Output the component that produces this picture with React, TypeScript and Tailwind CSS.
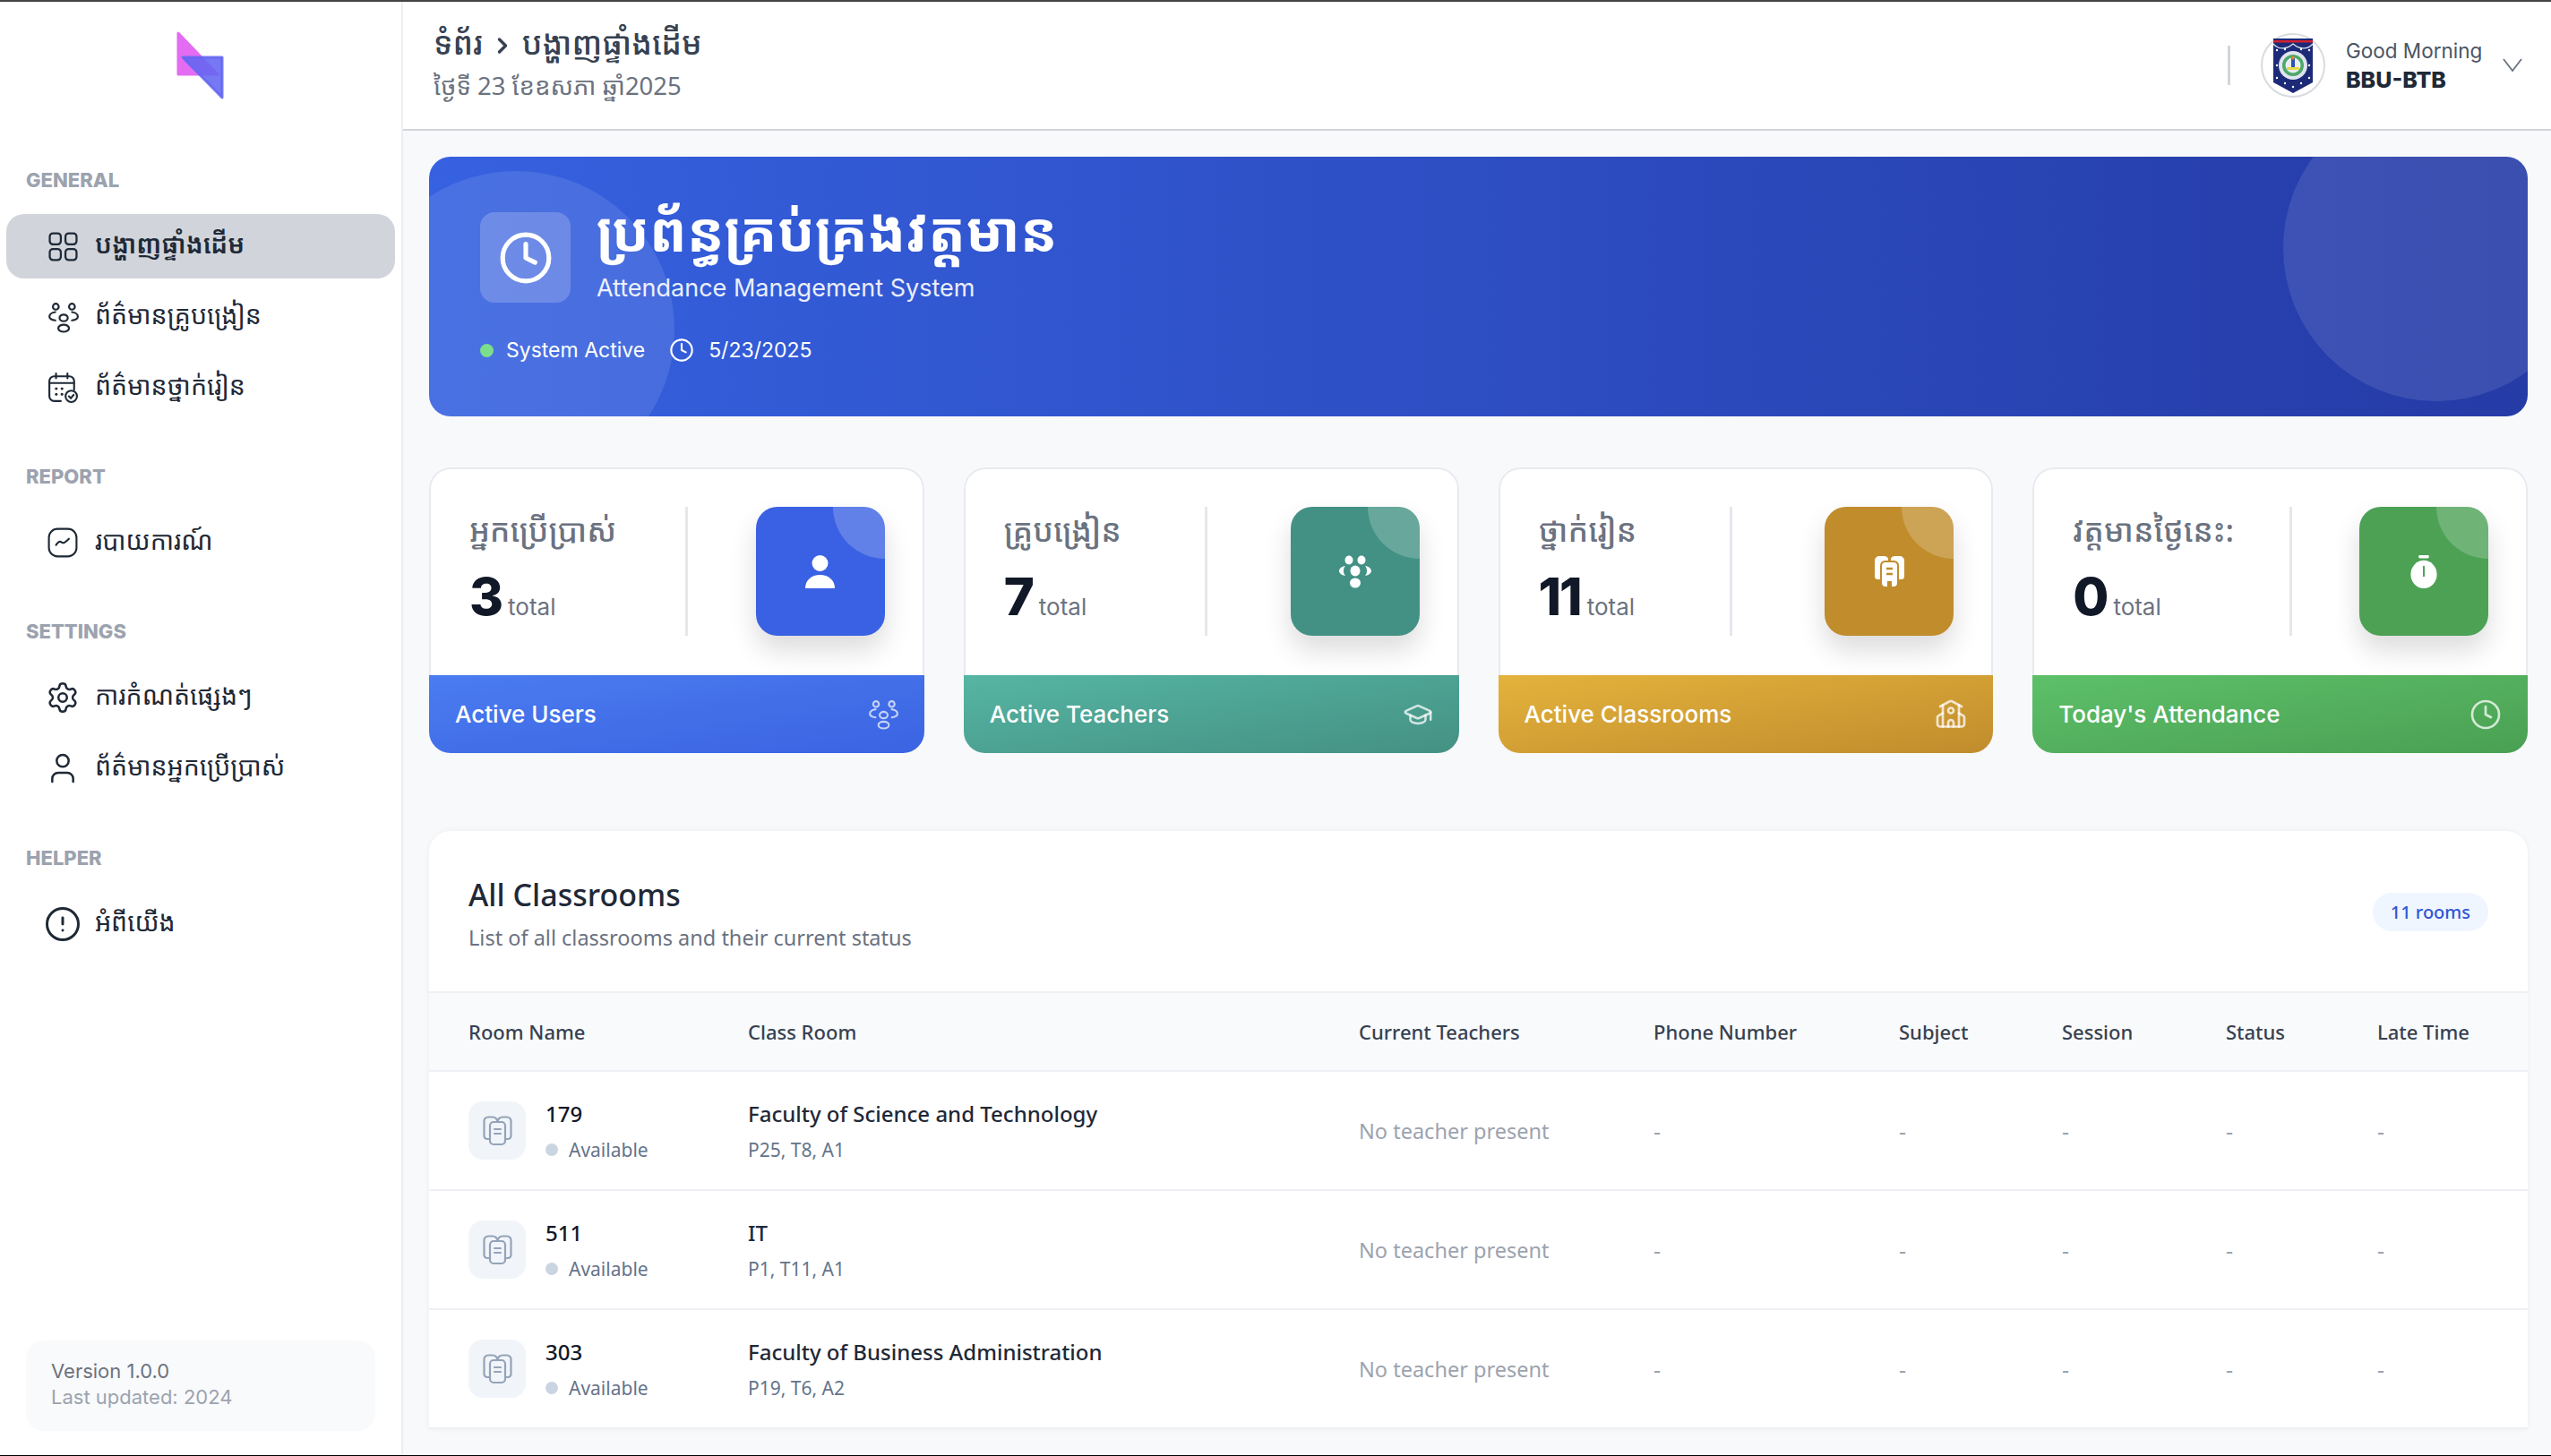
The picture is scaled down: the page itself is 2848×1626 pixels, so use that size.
import { CircleAlert, ChevronRight, Clock, GraduationCap, School, Settings, User } from 'lucide-react';

const khmer = "font-['Noto_Sans_Khmer','Noto_Sans','DejaVu_Sans',sans-serif]";

function PeopleIcon({ className }: { className?: string }) {
    return (
        <svg className={className} viewBox="0 0 32 32" fill="none" stroke="currentColor" strokeWidth="2">
            <circle cx="8.5" cy="5" r="3" />
            <circle cx="25" cy="5" r="3" />
            <ellipse cx="16.5" cy="16.5" rx="4.2" ry="3.4" />
            <ellipse cx="16.5" cy="27" rx="5.5" ry="3.6" />
            <path d="M8 10.5C4.5 11 2 13 2 15s2.500 3.500 6 4" strokeLinecap="round" />
            <path d="M25 10.500c3.500.5 6 2.500 6 4.500s-2.500 3.500-6 4" strokeLinecap="round" />
        </svg>
    );
}

function GridIcon({ className }: { className?: string }) {
    return (
        <svg className={className} viewBox="0 0 32 32" fill="none" stroke="currentColor" strokeWidth="2.200">
            <rect x="1.500" y="1.500" width="12" height="12" rx="3.500" />
            <rect x="18.500" y="1.500" width="12" height="12" rx="3.500" />
            <rect x="1.500" y="18.500" width="12" height="12" rx="3.500" />
            <rect x="18.500" y="18.500" width="12" height="12" rx="3.500" />
        </svg>
    );
}

function CalendarCheckIcon({ className }: { className?: string }) {
    return (
        <svg className={className} viewBox="0 0 32 32" fill="none" stroke="currentColor" strokeWidth="2" strokeLinecap="round">
            <path d="M14 30H7a5 5 0 0 1-5-5V9a5 5 0 0 1 5-5h16a5 5 0 0 1 5 5v9" />
            <path d="M2 11h26M9 1v5M21 1v5" />
            <path d="M9 17h.5M15 17h.5M9 23h.5M15 23h.5" strokeWidth="2.500" />
            <circle cx="25" cy="25" r="6" />
            <path d="M22.500 25l2 2 3-3.500" />
        </svg>
    );
}

function ReportIcon({ className }: { className?: string }) {
    return (
        <svg className={className} viewBox="0 0 32 32" fill="none" stroke="currentColor" strokeWidth="2" strokeLinecap="round" strokeLinejoin="round">
            <rect x="1.500" y="1.500" width="29" height="29" rx="9" />
            <path d="M9 18.500c2-3 3.500-4.500 5.500-3s3.500 1 8-3.500" />
        </svg>
    );
}

function RoomIcon({ className }: { className?: string }) {
    return (
        <svg className={className} viewBox="0 0 33 34" fill="none" stroke="currentColor" strokeWidth="2.200" strokeLinejoin="round">
            <path d="M8 26H5a3.500 3.500 0 0 1-3.500-3.500V6A4.500 4.500 0 0 1 6 1.500h5A5.500 5.500 0 0 1 16.500 7" />
            <path d="M25 26h3a3.500 3.500 0 0 0 3.500-3.500V6A4.500 4.500 0 0 0 27 1.500h-5A5.500 5.500 0 0 0 16.500 7" />
            <path d="M8 11a4 4 0 0 1 4-4h9a4 4 0 0 1 4 4v17a4 4 0 0 1-4 4h-9a4 4 0 0 1-4-4z" />
            <path d="M13 15h7M13 20h7" strokeLinecap="round" />
        </svg>
    );
}

function RoomSolidIcon({ className }: { className?: string }) {
    return (
        <svg className={className} viewBox="0 0 33 34">
            <path fill="#fff" d="M0 5a5 5 0 0 1 5-5h6a5 5 0 0 1 4 2.500v2.500h-3.500A5.500 5.500 0 0 0 6 10.500V26H3.500A3.500 3.500 0 0 1 0 22.500zM33 5a5 5 0 0 0-5-5h-6a5 5 0 0 0-4 2.500v2.500h3.500A5.500 5.500 0 0 1 27 10.500V26h2.500a3.500 3.500 0 0 0 3.500-3.500z" />
            <path fill="#fff" d="M8 11a4 4 0 0 1 4-4h9a4 4 0 0 1 4 4v19a4 4 0 0 1-4 4h-2v-6h-5v6h-2a4 4 0 0 1-4-4z" />
            <path d="M13 14h7M13 20h7" stroke="#c18c2c" strokeWidth="2.500" />
        </svg>
    );
}

function PersonSolidIcon({ className }: { className?: string }) {
    return (
        <svg className={className} viewBox="0 0 33 37" fill="#fff">
            <circle cx="16.500" cy="9" r="9" />
            <path d="M0 37C0 28 7 22 16.500 22S33 28 33 37z" />
        </svg>
    );
}

function GroupSolidIcon({ className }: { className?: string }) {
    return (
        <svg className={className} viewBox="0 0 36 36" fill="#fff">
            <ellipse cx="11" cy="5" rx="4.500" ry="5" />
            <ellipse cx="25" cy="5" rx="4.500" ry="5" />
            <ellipse cx="18" cy="17" rx="5.500" ry="6" />
            <ellipse cx="18" cy="30.500" rx="6" ry="5.500" />
            <path d="M7 11.500C3 12 0 14.500 0 17s3 5 7 5.500c-1.500-1.500-2-3.500-2-5.500s.5-4 2-5.500z" />
            <path d="M29 11.500c4 .5 7 3 7 5.500s-3 5-7 5.500c1.500-1.500 2-3.500 2-5.500s-.5-4-2-5.500z" />
        </svg>
    );
}

function TimerSolidIcon({ className }: { className?: string }) {
    return (
        <svg className={className} viewBox="0 0 30 38" fill="#fff">
            <rect x="9" y="0" width="12" height="3.500" rx="1.500" />
            <ellipse cx="15" cy="22" rx="15" ry="16" />
            <rect x="14" y="12" width="2" height="13" rx="1" fill="#4ca155" />
        </svg>
    );
}

function Logo() {
    return (
        <svg className="w-[54px] h-[76px]" viewBox="0 0 54 76">
            <path d="M2 2 46 48H2z" fill="#e36cf2" stroke="#e36cf2" strokeWidth="3" strokeLinejoin="round" />
            <path d="M7 29H51V74z" fill="#6366f1" fillOpacity="0.88" stroke="#6366f1" strokeOpacity="0.88" strokeWidth="3" strokeLinejoin="round" />
        </svg>
    );
}

function Emblem() {
    return (
        <svg className="w-[44px] h-[62px]" viewBox="0 0 44 62">
            <path d="M0 1h44v49L22 62 0 50z" fill="#1c2a78" />
            <rect x="0" y="3" width="44" height="2.500" fill="#d3212d" />
            <path d="M0 7c6 7 15 6 22 0 7 6 16 7 22 0" fill="none" stroke="#dfe3ee" strokeWidth="1.200" />
            <circle cx="22" cy="31" r="16" fill="#dfe5ee" />
            <circle cx="22" cy="31" r="12" fill="#4fa76a" />
            <circle cx="22" cy="31" r="8.500" fill="#e7eef2" />
            <path d="M20 23h4v10h-4z" fill="#2f55a8" />
            <path d="M22 20c2 2 2 4 0 5-2-1-2-3 0-5z" fill="#ef7d22" />
            <rect x="15" y="33" width="14" height="3" fill="#e7d94a" />
            <g fill="#fff">
                <circle cx="4" cy="14" r="1.200" />
                <circle cx="13" cy="13" r="1.200" />
                <circle cx="31" cy="13" r="1.200" />
                <circle cx="40" cy="14" r="1.200" />
                <circle cx="4" cy="31" r="1.200" />
                <circle cx="40" cy="31" r="1.200" />
                <circle cx="4" cy="45" r="1.200" />
                <circle cx="40" cy="45" r="1.200" />
                <circle cx="13" cy="51" r="1.200" />
                <circle cx="31" cy="51" r="1.200" />
                <circle cx="22" cy="55" r="1.200" />
            </g>
        </svg>
    );
}

const sections = [
    {
        label: 'GENERAL',
        gap: 'mt-0',
        items: [
            { name: 'បង្ហាញផ្ទាំងដើម', icon: <GridIcon className="w-[33px] h-[33px]" />, active: true },
            { name: 'ព័ត៌មានគ្រូបង្រៀន', icon: <PeopleIcon className="w-[35px] h-[35px]" /> },
            { name: 'ព័ត៌មានថ្នាក់រៀន', icon: <CalendarCheckIcon className="w-[34px] h-[34px]" /> },
        ],
    },
    {
        label: 'REPORT',
        gap: 'mt-[47px]',
        items: [{ name: 'របាយការណ៍', icon: <ReportIcon className="w-[34px] h-[34px]" /> }],
    },
    {
        label: 'SETTINGS',
        gap: 'mt-[47px]',
        items: [
            { name: 'ការកំណត់ផ្សេងៗ', icon: <Settings className="w-[38px] h-[38px]" strokeWidth={1.6} /> },
            { name: 'ព័ត៌មានអ្នកប្រើប្រាស់', icon: <User className="w-[40px] h-[40px]" strokeWidth={1.5} /> },
        ],
    },
    {
        label: 'HELPER',
        gap: 'mt-[48px]',
        items: [{ name: 'អំពីយើង', icon: <CircleAlert className="w-[42px] h-[42px]" strokeWidth={1.7} /> }],
    },
];

const stats = [
    {
        title: 'អ្នកប្រើប្រាស់',
        count: 3,
        footer: 'Active Users',
        textWidth: 'w-[241px]',
        iconBg: 'bg-[#3a61e3]',
        footerBg: 'bg-linear-to-br from-[#4b7cf0] to-[#3b63e2]',
        icon: <PersonSolidIcon className="w-[33px] h-[37px]" />,
        footerIcon: <PeopleIcon className="w-[34px] h-[34px] text-white/70" />,
    },
    {
        title: 'គ្រូបង្រៀន',
        count: 7,
        footer: 'Active Teachers',
        textWidth: 'w-[224px]',
        iconBg: 'bg-[#429184]',
        footerBg: 'bg-linear-to-br from-[#56b5a3] to-[#449183]',
        icon: <GroupSolidIcon className="w-[36px] h-[37px]" />,
        footerIcon: <GraduationCap className="w-[34px] h-[34px] text-white/75" strokeWidth={1.8} />,
    },
    {
        title: 'ថ្នាក់រៀន',
        count: 11,
        footer: 'Active Classrooms',
        textWidth: 'w-[213px]',
        iconBg: 'bg-[#c18c2c]',
        footerBg: 'bg-linear-to-br from-[#e3b33c] to-[#c18c2d]',
        icon: <RoomSolidIcon className="w-[33px] h-[34px]" />,
        footerIcon: <School className="w-[36px] h-[36px] text-white/75" strokeWidth={1.8} />,
    },
    {
        title: 'វត្តមានថ្ងៃនេះ:',
        count: 0,
        footer: "Today's Attendance",
        textWidth: 'w-[242px]',
        iconBg: 'bg-[#4ca155]',
        footerBg: 'bg-linear-to-br from-[#5dc069] to-[#4aa053]',
        icon: <TimerSolidIcon className="w-[30px] h-[37px]" />,
        footerIcon: <Clock className="w-[36px] h-[36px] text-white/75" strokeWidth={1.8} />,
    },
];

const rooms = [
    { no: '179', name: 'Faculty of Science and Technology', meta: 'P25, T8, A1' },
    { no: '511', name: 'IT', meta: 'P1, T11, A1' },
    { no: '303', name: 'Faculty of Business Administration', meta: 'P19, T6, A2' },
];

const columns = ['Current Teachers', 'Phone Number', 'Subject', 'Session', 'Status', 'Late Time'];

export default function App() {
    return (
        <div className="h-[1626px] w-full flex overflow-hidden border-t-2 border-b border-t-[#444444] border-b-black bg-[#f8f9fb] font-['Inter',sans-serif]">
            {/* Sidebar */}
            <aside className="w-[450px] shrink-0 h-full flex flex-col bg-white border-r-2 border-[#eceef2] px-[7px]">
                <div className="flex justify-center pt-[33px] mb-[74px]">
                    <Logo />
                </div>
                <nav>
                    {sections.map((section) => (
                        <div key={section.label} className={section.gap}>
                            <div className="pl-[22px] h-[32px] mb-[22px] flex items-center text-[22px] font-extrabold text-[#9ca3af]">
                                {section.label}
                            </div>
                            <div className="flex flex-col gap-[7px]">
                                {section.items.map((item) => (
                                    <div
                                        key={item.name}
                                        className={`h-[72px] flex items-center rounded-[20px] pl-[42px] ${item.active ? 'bg-[#d1d5db]' : ''}`}
                                    >
                                        <span className="w-[42px] flex justify-center text-[#1f2937]">{item.icon}</span>
                                        <span className={`ml-[15px] -mt-[6px] text-[28.5px] text-[#1f2937] ${khmer} ${item.active ? 'font-semibold' : ''}`}>
                                            {item.name}
                                        </span>
                                    </div>
                                ))}
                            </div>
                        </div>
                    ))}
                </nav>
                <div className="mt-auto mb-[27px] mx-[22px] h-[101px] rounded-[20px] bg-[#f9fafb] pl-[28px] pb-[3px] flex flex-col justify-center">
                    <div className="text-[22px] leading-[29px] text-[#6b7280]">Version 1.0.0</div>
                    <div className="text-[22px] leading-[29px] text-[#9ca3af]">Last updated: 2024</div>
                </div>
            </aside>

            <div className="flex-1 min-w-0 flex flex-col">
                {/* Header */}
                <header className="h-[144px] shrink-0 bg-white border-b-2 border-[#d1d5db] flex items-center pl-[34px] pr-[32px]">
                    <div className="-mt-[6px]">
                        <div className={`flex items-center text-[35px] leading-[52px] font-medium text-[#374151] ${khmer}`}>
                            <span>ទំព័រ</span>
                            <ChevronRight className="w-[28px] h-[28px] mx-[8px] mt-[6px]" strokeWidth={3} />
                            <span>បង្ហាញផ្ទាំងដើម</span>
                        </div>
                        <div className={`text-[27.5px] leading-[44px] text-[#6b7280] ${khmer}`}>ថ្ងៃទី 23 ខែឧសភា ឆ្នាំ2025</div>
                    </div>
                    <div className="ml-auto flex items-center">
                        <div className="w-[3px] h-[44px] bg-[#d1d5db]" />
                        <div className="ml-[34px] w-[72px] h-[72px] rounded-full border-2 border-[#d9dbe0] flex items-center justify-center">
                            <Emblem />
                        </div>
                        <div className="ml-[23px] w-[152px] whitespace-nowrap">
                            <div className="text-[22.5px] leading-[32px] text-[#4b5563]">Good Morning</div>
                            <div className="text-[25px] leading-[32px] font-extrabold text-[#1f2937]">BBU-BTB</div>
                        </div>
                        <svg className="ml-[23px] w-[22px] h-[16px] text-[#6b7280]" viewBox="0 0 22 16" fill="none" stroke="currentColor" strokeWidth="1.800">
                            <path d="M1 1l10 13L21 1" />
                        </svg>
                    </div>
                </header>

                <main className="flex-1 min-h-0 pt-[29px] pl-[29px] pr-[26px]">
                    {/* Banner */}
                    <section className="relative h-[290px] rounded-[24px] overflow-hidden bg-linear-to-r from-[#3661e0] to-[#253ba6] pl-[57px] pt-[62px] text-white">
                        <div className="absolute left-[-80px] top-[16px] w-[354px] h-[354px] rounded-full bg-white/10" />
                        <div className="absolute left-[2070px] top-[-69px] w-[342px] h-[342px] rounded-full bg-white/10" />
                        <div className="relative flex items-start">
                            <div className="w-[101px] h-[101px] rounded-[16px] bg-white/20 flex items-center justify-center">
                                <Clock className="w-[62px] h-[62px]" strokeWidth={2} />
                            </div>
                            <div className="ml-[29px] -mt-[18px]">
                                <h1 className={`text-[62px] leading-[76px] font-bold ${khmer}`}>ប្រព័ន្ធគ្រប់គ្រងវត្តមាន</h1>
                                <p className="mt-[9px] text-[27px] leading-[36px] text-white/90">Attendance Management System</p>
                            </div>
                        </div>
                        <div className="relative mt-[34px] flex items-center text-[23px]">
                            <span className="w-[15px] h-[15px] rounded-full bg-[#7ade8c]" />
                            <span className="ml-[14px]">System Active</span>
                            <Clock className="ml-[27px] w-[28px] h-[28px]" strokeWidth={1.8} />
                            <span className="ml-[16px]">5/23/2025</span>
                        </div>
                    </section>

                    {/* Stat cards */}
                    <section className="mt-[57px] grid grid-cols-4 gap-[44px]">
                        {stats.map((stat) => (
                            <div key={stat.footer} className="h-[319px] rounded-[24px] overflow-hidden flex flex-col">
                                <div className="flex-1 flex items-start bg-white border-2 border-b-0 border-[#e8eaef] rounded-t-[24px] pl-[43px] pr-[42px] pt-[42px]">
                                    <div className={`${stat.textWidth} h-[144px] shrink-0`}>
                                        <div className={`text-[35px] leading-[52px] font-medium text-[#6b7280] ${khmer}`}>{stat.title}</div>
                                        <div className="mt-[16px] flex items-baseline gap-[7px]">
                                            <span className="text-[58px] leading-[64px] font-extrabold tracking-[-2px] text-[#111827]">{stat.count}</span>
                                            <span className="text-[26px] text-[#6b7280]">total</span>
                                        </div>
                                    </div>
                                    <div className="w-[3px] h-[144px] bg-[#e5e7eb]" />
                                    <div className={`relative ml-auto w-[144px] h-[144px] rounded-[24px] ${stat.iconBg} shadow-[0_16px_30px_rgba(0,0,0,0.14)] flex items-center justify-center overflow-hidden`}>
                                        <div className="absolute top-[-58px] right-[-58px] w-[116px] h-[116px] rounded-full bg-white/20" />
                                        {stat.icon}
                                    </div>
                                </div>
                                <div className={`h-[87px] shrink-0 ${stat.footerBg} flex items-center justify-between pl-[29px] pr-[29px] text-[26px] font-medium text-white`}>
                                    <span>{stat.footer}</span>
                                    {stat.footerIcon}
                                </div>
                            </div>
                        ))}
                    </section>

                    {/* Classrooms */}
                    <section className="mt-[87px] rounded-t-[24px] bg-white shadow-[0_0_6px_rgba(0,0,0,0.05)] overflow-hidden font-['Noto_Sans',sans-serif]">
                        <div className="h-[179px] pl-[44px] pr-[44px] flex items-start justify-between">
                            <div className="pt-[45px]">
                                <h2 className="text-[34px] leading-[52px] font-medium text-[#1f2937]">All Classrooms</h2>
                                <p className="mt-[4px] text-[23.5px] leading-[36px] text-[#6b7280]">List of all classrooms and their current status</p>
                            </div>
                            <span className="mt-[69px] h-[43px] px-[20px] rounded-full bg-[#eff6ff] text-[#2f55d4] text-[20px] font-medium flex items-center">11 rooms</span>
                        </div>
                        <table className="w-full table-fixed border-collapse">
                            <colgroup>
                                <col className="w-[356px]" />
                                <col className="w-[682px]" />
                                <col className="w-[329px]" />
                                <col className="w-[274px]" />
                                <col className="w-[182px]" />
                                <col className="w-[183px]" />
                                <col className="w-[169px]" />
                                <col />
                            </colgroup>
                            <thead>
                                <tr className="h-[88px] bg-[#f9fafb] border-y-2 border-[#eef0f5] text-left text-[22px] font-medium text-[#374151]">
                                    <th className="pl-[44px] font-medium">Room Name</th>
                                    <th className="font-medium">Class Room</th>
                                    {columns.map((col) => (
                                        <th key={col} className="font-medium">{col}</th>
                                    ))}
                                </tr>
                            </thead>
                            <tbody>
                                {rooms.map((room) => (
                                    <tr key={room.no} className="h-[133px] border-b-2 border-[#eef0f5]">
                                        <td className="pl-[44px]">
                                            <div className="flex items-center gap-[22px]">
                                                <div className="w-[64px] h-[65px] rounded-[16px] bg-[#f1f5f9] flex items-center justify-center">
                                                    <RoomIcon className="w-[33px] h-[34px] text-[#94a3b8]" />
                                                </div>
                                                <div>
                                                    <div className="text-[24px] leading-[38px] font-medium text-[#111827]">{room.no}</div>
                                                    <div className="mt-[5px] flex items-center gap-[12px] text-[21px] leading-[32px] text-[#64748b]">
                                                        <span className="w-[14px] h-[14px] rounded-full bg-[#cbd5e1]" />
                                                        Available
                                                    </div>
                                                </div>
                                            </div>
                                        </td>
                                        <td>
                                            <div className="text-[24px] leading-[38px] font-medium text-[#1f2937]">{room.name}</div>
                                            <div className="mt-[5px] text-[21px] leading-[32px] text-[#64748b]">{room.meta}</div>
                                        </td>
                                        <td className="pt-[2px] text-[23.5px] text-[#9ca3af]">No teacher present</td>
                                        {[0, 1, 2, 3, 4].map((i) => (
                                            <td key={i} className="pt-[2px] text-[25px] text-[#9ca3af]">-</td>
                                        ))}
                                    </tr>
                                ))}
                            </tbody>
                        </table>
                    </section>
                </main>
            </div>
        </div>
    );
}
